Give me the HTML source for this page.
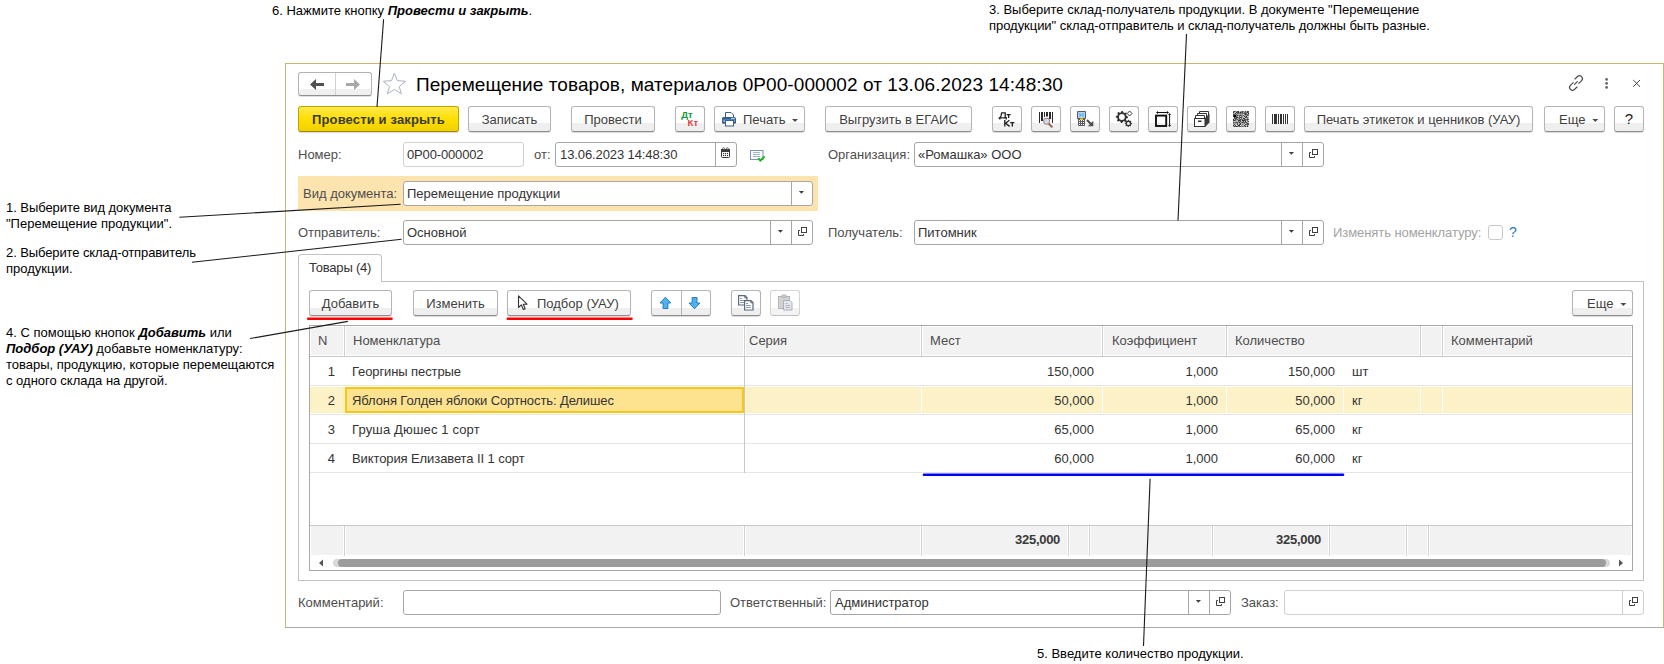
<!DOCTYPE html>
<html><head><meta charset="utf-8"><style>
html,body{margin:0;padding:0;background:#fff;width:1664px;height:664px;overflow:hidden;position:relative}
body>div,body>svg{position:absolute}
.t{white-space:nowrap;font-family:'Liberation Sans', sans-serif}
</style></head><body>
<div style="left:285px;top:63px;width:1379px;height:565px;box-sizing:border-box;border:1px solid #c8b672;border-bottom-color:#a9a9a9;background:#fff"></div>
<div style="left:298px;top:72px;width:74px;height:24px;box-sizing:border-box;border:1px solid #b3b3b3;border-bottom-color:#8f8f8f;border-radius:3px;background:linear-gradient(#fff 0,#fff 16px,#f0f0f0 16px);box-shadow:0 1px 0 rgba(0,0,0,.12)"></div>
<div style="left:335px;top:73px;width:1px;height:22px;background:#d2d2d2"></div>
<svg style="left:308px;top:77px" width="20" height="16" viewBox="0 0 20 16"><path d="M2 7.5 L8 2 L8 6 L16 6 L16 9 L8 9 L8 13 Z" fill="#505050"/></svg>
<svg style="left:344px;top:77px" width="20" height="16" viewBox="0 0 20 16"><path d="M16 7.5 L10 2 L10 6 L2 6 L2 9 L10 9 L10 13 Z" fill="#a8a8a8"/></svg>
<svg style="left:381px;top:71px" width="28" height="26" viewBox="0 0 28 26"><path d="M13.4 2.2 L16.3 9.6 L24.6 10.3 L18.2 15.6 L20.4 22.8 L13.4 18.5 L6.4 22.8 L8.6 15.6 L2.2 10.3 L10.5 9.6 Z" fill="none" stroke="#aab2c2" stroke-width="1"/></svg>
<div class="t" style="top:74px;font-size:19px;line-height:22px;color:#000;left:416px;letter-spacing:0.07px">Перемещение товаров, материалов 0Р00-000002 от 13.06.2023 14:48:30</div>
<svg style="left:1565px;top:72px" width="22" height="22" viewBox="0 0 22 22"><g fill="none" stroke="#4a4a4a" stroke-width="1.15" stroke-linecap="round"><path d="M9.6 12.4 L12.4 9.6"/><path d="M8.2 10.6 L5.4 13.4 a2.9 2.9 0 0 0 4.1 4.1 L12 15"/><path d="M13.8 11.4 L16.6 8.6 a2.9 2.9 0 0 0 -4.1 -4.1 L10 7"/></g></svg>
<svg style="left:1603px;top:77px" width="8" height="14" viewBox="0 0 8 14"><g fill="#666"><circle cx="3.6" cy="2.4" r="1.4"/><circle cx="3.6" cy="6.4" r="1.4"/><circle cx="3.6" cy="10.4" r="1.4"/></g></svg>
<svg style="left:1630px;top:78px" width="12" height="12" viewBox="0 0 12 12"><g stroke="#444" stroke-width="1"><path d="M3.2 2 L10 8.8 M10 2 L3.2 8.8"/></g></svg>
<div style="left:298px;top:106px;width:161px;height:26px;box-sizing:border-box;border:1px solid #c2a400;border-bottom-color:#a08800;border-radius:3px;background:linear-gradient(#ffe94d,#ffdf00 50%,#f2d000);box-shadow:0 1px 1px rgba(0,0,0,.15)"></div>
<div class="t" style="left:298px;width:161px;text-align:center;top:112px;font-size:13px;line-height:16px;color:#3a3a3a;font-weight:700;"><span style='letter-spacing:0.15px'>Провести и закрыть</span></div>
<div style="left:468px;top:106px;width:83px;height:26px;box-sizing:border-box;border:1px solid #b5b5b5;border-bottom-color:#8c8c8c;border-radius:3px;background:linear-gradient(#fff 0,#fff 16px,#efefef 16px);box-shadow:0 1px 1px rgba(0,0,0,.15)"></div>
<div class="t" style="left:468px;width:83px;text-align:center;top:112px;font-size:13px;line-height:16px;color:#404040;">Записать</div>
<div style="left:571px;top:106px;width:84px;height:26px;box-sizing:border-box;border:1px solid #b5b5b5;border-bottom-color:#8c8c8c;border-radius:3px;background:linear-gradient(#fff 0,#fff 16px,#efefef 16px);box-shadow:0 1px 1px rgba(0,0,0,.15)"></div>
<div class="t" style="left:571px;width:84px;text-align:center;top:112px;font-size:13px;line-height:16px;color:#404040;">Провести</div>
<div style="left:675px;top:106px;width:30px;height:26px;box-sizing:border-box;border:1px solid #b5b5b5;border-bottom-color:#8c8c8c;border-radius:3px;background:linear-gradient(#fff 0,#fff 16px,#efefef 16px);box-shadow:0 1px 1px rgba(0,0,0,.15)"></div>
<div style="left:714px;top:106px;width:91px;height:26px;box-sizing:border-box;border:1px solid #b5b5b5;border-bottom-color:#8c8c8c;border-radius:3px;background:linear-gradient(#fff 0,#fff 16px,#efefef 16px);box-shadow:0 1px 1px rgba(0,0,0,.15)"></div>
<svg style="left:720px;top:110px" width="18" height="18" viewBox="720 110 18 18"><path d="M725.5 112.5 H731 L733.5 115 V118.5 H725.5 Z" fill="#fff" stroke="#3b5f8c"/><rect x="722" y="117" width="14" height="6.8" rx="1.6" fill="#2f5f94"/><rect x="723.3" y="119.6" width="11.4" height="2.4" fill="#8fb0d8"/><rect x="731.3" y="117.8" width="1.3" height="1.2" fill="#fff"/><rect x="733.3" y="117.8" width="1.3" height="1.2" fill="#fff"/><rect x="725.5" y="120.5" width="8" height="5.5" fill="#fff" stroke="#3b5f8c"/></svg>
<div class="t" style="top:112px;font-size:13px;line-height:16px;color:#404040;left:743px;">Печать</div>
<svg style="left:792px;top:118px" width="8" height="6" viewBox="0 0 8 6"><path d="M0 1 H6 L3 4 Z" fill="#4d4d4d"/></svg>
<div style="left:825px;top:106px;width:147px;height:26px;box-sizing:border-box;border:1px solid #b5b5b5;border-bottom-color:#8c8c8c;border-radius:3px;background:linear-gradient(#fff 0,#fff 16px,#efefef 16px);box-shadow:0 1px 1px rgba(0,0,0,.15)"></div>
<div class="t" style="left:825px;width:147px;text-align:center;top:112px;font-size:13px;line-height:16px;color:#404040;">Выгрузить в ЕГАИС</div>
<div style="left:992px;top:106px;width:30px;height:26px;box-sizing:border-box;border:1px solid #b5b5b5;border-bottom-color:#8c8c8c;border-radius:3px;background:linear-gradient(#fff 0,#fff 16px,#efefef 16px);box-shadow:0 1px 1px rgba(0,0,0,.15)"></div>
<div style="left:1031px;top:106px;width:30px;height:26px;box-sizing:border-box;border:1px solid #b5b5b5;border-bottom-color:#8c8c8c;border-radius:3px;background:linear-gradient(#fff 0,#fff 16px,#efefef 16px);box-shadow:0 1px 1px rgba(0,0,0,.15)"></div>
<div style="left:1070px;top:106px;width:30px;height:26px;box-sizing:border-box;border:1px solid #b5b5b5;border-bottom-color:#8c8c8c;border-radius:3px;background:linear-gradient(#fff 0,#fff 16px,#efefef 16px);box-shadow:0 1px 1px rgba(0,0,0,.15)"></div>
<div style="left:1109px;top:106px;width:30px;height:26px;box-sizing:border-box;border:1px solid #b5b5b5;border-bottom-color:#8c8c8c;border-radius:3px;background:linear-gradient(#fff 0,#fff 16px,#efefef 16px);box-shadow:0 1px 1px rgba(0,0,0,.15)"></div>
<div style="left:1148px;top:106px;width:30px;height:26px;box-sizing:border-box;border:1px solid #b5b5b5;border-bottom-color:#8c8c8c;border-radius:3px;background:linear-gradient(#fff 0,#fff 16px,#efefef 16px);box-shadow:0 1px 1px rgba(0,0,0,.15)"></div>
<div style="left:1187px;top:106px;width:30px;height:26px;box-sizing:border-box;border:1px solid #b5b5b5;border-bottom-color:#8c8c8c;border-radius:3px;background:linear-gradient(#fff 0,#fff 16px,#efefef 16px);box-shadow:0 1px 1px rgba(0,0,0,.15)"></div>
<div style="left:1226px;top:106px;width:30px;height:26px;box-sizing:border-box;border:1px solid #b5b5b5;border-bottom-color:#8c8c8c;border-radius:3px;background:linear-gradient(#fff 0,#fff 16px,#efefef 16px);box-shadow:0 1px 1px rgba(0,0,0,.15)"></div>
<div style="left:1265px;top:106px;width:30px;height:26px;box-sizing:border-box;border:1px solid #b5b5b5;border-bottom-color:#8c8c8c;border-radius:3px;background:linear-gradient(#fff 0,#fff 16px,#efefef 16px);box-shadow:0 1px 1px rgba(0,0,0,.15)"></div>
<svg style="left:0;top:0" width="1664" height="140" viewBox="0 0 1664 140">
<g font-family="Liberation Sans" font-size="9.5" font-weight="700">
<text x="681.3" y="118" fill="#149a3c">Дт</text><text x="687.6" y="126" fill="#e23c3c">Кт</text>
</g>
<g stroke="#222" stroke-width="1.35" fill="none" stroke-linecap="butt">
<path d="M1001.2 112.8 H1005.2 V117.8 M1001.6 112.8 Q1001.6 116.5 999.8 117.8 H1006.6 M999.8 117 V119.6 M1006.2 117 V119.6"/>
<path d="M1006.6 114.6 H1010.6 M1008.6 114.6 V118"/>
<path d="M1004.8 120 V126.4 M1009.4 120.2 L1005.6 123.2 L1009.6 126.4"/>
<path d="M1010.2 122.6 H1014.4 M1012.3 122.6 V126.4"/>
</g>
<g fill="#2a2a2a">
<rect x="1039" y="112" width="1" height="11"/><rect x="1041" y="112" width="2" height="9"/><rect x="1044" y="112" width="1" height="5"/><rect x="1046" y="112" width="2" height="4.5"/><rect x="1049" y="112" width="2" height="7"/><rect x="1052" y="112" width="1" height="11"/>
</g>
<path d="M1049 124 L1051.8 126.8" stroke="#9a6a50" stroke-width="2" stroke-linecap="round"/>
<circle cx="1046.6" cy="121.2" r="3.1" fill="#c6def5" stroke="#b87060" stroke-width="1"/>
<path d="M1078 111 H1085 Q1086 111 1086 112 V118.5 L1085 119.5 V125 Q1085 126 1084 126 H1079 Q1078 126 1078 125 V119.5 L1077 118.5 V112 Q1077 111 1078 111 Z" fill="#5a5a5a"/>
<rect x="1078" y="112" width="7" height="6" fill="#a9d4f5"/>
<path d="M1079 113.5 L1081.5 115 L1079 116.5 M1082 114 H1084 M1082 116 H1084" stroke="#4aa0e0" stroke-width="0.9" fill="none"/>
<rect x="1080" y="118.4" width="3" height="1.6" fill="#f5d200"/>
<g fill="#fff"><rect x="1079" y="120" width="1" height="1"/><rect x="1081" y="120" width="1" height="1"/><rect x="1083" y="120" width="1" height="1"/><rect x="1079" y="122" width="1" height="1"/><rect x="1081" y="122" width="1" height="1"/><rect x="1083" y="122" width="1" height="1"/><rect x="1079" y="124" width="1" height="1"/><rect x="1081" y="124" width="1" height="1"/><rect x="1083" y="124" width="1" height="1"/></g>
<path d="M1087 120 L1091.5 124.5" stroke="#505050" stroke-width="2.2"/><path d="M1093.3 120.8 V126.3 H1087.8 Z" fill="#505050"/>
<path d="M1121.60 110.91 L1122.80 110.97 L1123.48 112.57 L1124.32 112.97 L1126.00 112.48 L1126.80 113.37 L1126.15 114.99 L1126.46 115.86 L1127.99 116.70 L1127.93 117.90 L1126.33 118.58 L1125.93 119.42 L1126.42 121.10 L1125.53 121.90 L1123.91 121.25 L1123.04 121.56 L1122.20 123.09 L1121.00 123.03 L1120.32 121.43 L1119.48 121.03 L1117.80 121.52 L1117.00 120.63 L1117.65 119.01 L1117.34 118.14 L1115.81 117.30 L1115.87 116.10 L1117.47 115.42 L1117.87 114.58 L1117.38 112.90 L1118.27 112.10 L1119.89 112.75 L1120.76 112.44 Z M1124.80 117.00 A2.9 2.9 0 1 0 1119.00 117.00 A2.9 2.9 0 1 0 1124.80 117.00 Z" fill="#333" fill-rule="evenodd"/>
<path d="M1128.22 119.70 L1128.94 119.74 L1129.34 120.76 L1129.84 121.00 L1130.88 120.66 L1131.37 121.20 L1130.93 122.20 L1131.12 122.72 L1132.10 123.22 L1132.06 123.94 L1131.04 124.34 L1130.80 124.84 L1131.14 125.88 L1130.60 126.37 L1129.60 125.93 L1129.08 126.12 L1128.58 127.10 L1127.86 127.06 L1127.46 126.04 L1126.96 125.80 L1125.92 126.14 L1125.43 125.60 L1125.87 124.60 L1125.68 124.08 L1124.70 123.58 L1124.74 122.86 L1125.76 122.46 L1126.00 121.96 L1125.66 120.92 L1126.20 120.43 L1127.20 120.87 L1127.72 120.68 Z M1129.90 123.40 A1.5 1.5 0 1 0 1126.90 123.40 A1.5 1.5 0 1 0 1129.90 123.40 Z" fill="#333" fill-rule="evenodd"/>
<path d="M1129.6 111 L1132 113.5 L1129.6 116 L1127.2 113.5 Z" fill="none" stroke="#333" stroke-width="1"/>
<rect x="1156" y="115.6" width="10.2" height="10.4" fill="none" stroke="#111" stroke-width="1.9"/>
<path d="M1157 112.5 H1168 M1169.6 114 V126" stroke="#111" stroke-width="1"/>
<path d="M1156 112.5 L1158 111 V114 Z M1169 112.5 L1167 111 V114 Z M1169.6 113 L1168.2 115 H1171 Z M1169.6 127 L1168.2 125 H1171 Z" fill="#111"/>
<path d="M1199.5 111.5 H1208.5 V118 H1199.5 Z" fill="#fff" stroke="#333"/>
<path d="M1197.5 113.5 H1206.5 V120 H1197.5 Z" fill="#fff" stroke="#333"/>
<path d="M1195.5 115.5 H1204.5 V120 H1195.5 Z" fill="#fff" stroke="#333"/>
<path d="M1205 118 L1209.5 113.5 V122.5 L1205 127 Z" fill="#3a3a3a"/>
<rect x="1194.5" y="118.5" width="10.5" height="8" fill="#fff" stroke="#333"/>
<rect x="1198" y="120.5" width="3.5" height="1.5" fill="#333"/>
<g fill="#3a3a3a"><rect x="1233" y="111" width="1" height="1" fill="#6a6a6a"/><rect x="1234" y="111" width="1" height="1" fill="#4a4a4a"/><rect x="1235" y="111" width="1" height="1" fill="#6a6a6a"/><rect x="1236" y="111" width="1" height="1" fill="#a0a0a0"/><rect x="1237" y="111" width="1" height="1" fill="#5a5a5a"/><rect x="1238" y="111" width="1" height="1" fill="#333"/><rect x="1239" y="111" width="1" height="1" fill="#d8d8d8"/><rect x="1240" y="111" width="1" height="1" fill="#a0a0a0"/><rect x="1241" y="111" width="1" height="1" fill="#8a8a8a"/><rect x="1242" y="111" width="1" height="1" fill="#4a4a4a"/><rect x="1243" y="111" width="1" height="1" fill="#8a8a8a"/><rect x="1244" y="111" width="1" height="1" fill="#b8b8b8"/><rect x="1245" y="111" width="1" height="1" fill="#4a4a4a"/><rect x="1246" y="111" width="1" height="1" fill="#b8b8b8"/><rect x="1247" y="111" width="1" height="1" fill="#333"/><rect x="1248" y="111" width="1" height="1" fill="#5a5a5a"/><rect x="1233" y="112" width="1" height="1" fill="#333"/><rect x="1234" y="112" width="1" height="1" fill="#b8b8b8"/><rect x="1235" y="112" width="1" height="1" fill="#b8b8b8"/><rect x="1236" y="112" width="1" height="1" fill="#333"/><rect x="1237" y="112" width="1" height="1" fill="#5a5a5a"/><rect x="1238" y="112" width="1" height="1" fill="#333"/><rect x="1239" y="112" width="1" height="1" fill="#8a8a8a"/><rect x="1240" y="112" width="1" height="1" fill="#333"/><rect x="1241" y="112" width="1" height="1" fill="#6a6a6a"/><rect x="1242" y="112" width="1" height="1" fill="#4a4a4a"/><rect x="1243" y="112" width="1" height="1" fill="#b8b8b8"/><rect x="1244" y="112" width="1" height="1" fill="#5a5a5a"/><rect x="1245" y="112" width="1" height="1" fill="#6a6a6a"/><rect x="1246" y="112" width="1" height="1" fill="#8a8a8a"/><rect x="1247" y="112" width="1" height="1" fill="#333"/><rect x="1248" y="112" width="1" height="1" fill="#6a6a6a"/><rect x="1233" y="113" width="1" height="1" fill="#a0a0a0"/><rect x="1234" y="113" width="1" height="1" fill="#a0a0a0"/><rect x="1235" y="113" width="1" height="1" fill="#4a4a4a"/><rect x="1236" y="113" width="1" height="1" fill="#a0a0a0"/><rect x="1237" y="113" width="1" height="1" fill="#6a6a6a"/><rect x="1238" y="113" width="1" height="1" fill="#6a6a6a"/><rect x="1239" y="113" width="1" height="1" fill="#8a8a8a"/><rect x="1240" y="113" width="1" height="1" fill="#5a5a5a"/><rect x="1241" y="113" width="1" height="1" fill="#8a8a8a"/><rect x="1242" y="113" width="1" height="1" fill="#6a6a6a"/><rect x="1243" y="113" width="1" height="1" fill="#8a8a8a"/><rect x="1244" y="113" width="1" height="1" fill="#4a4a4a"/><rect x="1245" y="113" width="1" height="1" fill="#5a5a5a"/><rect x="1246" y="113" width="1" height="1" fill="#5a5a5a"/><rect x="1247" y="113" width="1" height="1" fill="#d8d8d8"/><rect x="1248" y="113" width="1" height="1" fill="#333"/><rect x="1233" y="114" width="1" height="1" fill="#4a4a4a"/><rect x="1234" y="114" width="1" height="1" fill="#5a5a5a"/><rect x="1235" y="114" width="1" height="1" fill="#6a6a6a"/><rect x="1236" y="114" width="1" height="1" fill="#6a6a6a"/><rect x="1237" y="114" width="1" height="1" fill="#a0a0a0"/><rect x="1238" y="114" width="1" height="1" fill="#a0a0a0"/><rect x="1239" y="114" width="1" height="1" fill="#b8b8b8"/><rect x="1240" y="114" width="1" height="1" fill="#a0a0a0"/><rect x="1241" y="114" width="1" height="1" fill="#a0a0a0"/><rect x="1242" y="114" width="1" height="1" fill="#a0a0a0"/><rect x="1243" y="114" width="1" height="1" fill="#d8d8d8"/><rect x="1244" y="114" width="1" height="1" fill="#8a8a8a"/><rect x="1245" y="114" width="1" height="1" fill="#333"/><rect x="1246" y="114" width="1" height="1" fill="#5a5a5a"/><rect x="1247" y="114" width="1" height="1" fill="#6a6a6a"/><rect x="1248" y="114" width="1" height="1" fill="#6a6a6a"/><rect x="1233" y="115" width="1" height="1" fill="#4a4a4a"/><rect x="1234" y="115" width="1" height="1" fill="#8a8a8a"/><rect x="1235" y="115" width="1" height="1" fill="#6a6a6a"/><rect x="1236" y="115" width="1" height="1" fill="#8a8a8a"/><rect x="1237" y="115" width="1" height="1" fill="#4a4a4a"/><rect x="1238" y="115" width="1" height="1" fill="#8a8a8a"/><rect x="1239" y="115" width="1" height="1" fill="#6a6a6a"/><rect x="1240" y="115" width="1" height="1" fill="#333"/><rect x="1241" y="115" width="1" height="1" fill="#5a5a5a"/><rect x="1242" y="115" width="1" height="1" fill="#a0a0a0"/><rect x="1243" y="115" width="1" height="1" fill="#4a4a4a"/><rect x="1244" y="115" width="1" height="1" fill="#b8b8b8"/><rect x="1245" y="115" width="1" height="1" fill="#a0a0a0"/><rect x="1246" y="115" width="1" height="1" fill="#8a8a8a"/><rect x="1247" y="115" width="1" height="1" fill="#5a5a5a"/><rect x="1248" y="115" width="1" height="1" fill="#8a8a8a"/><rect x="1233" y="116" width="1" height="1" fill="#333"/><rect x="1234" y="116" width="1" height="1" fill="#5a5a5a"/><rect x="1235" y="116" width="1" height="1" fill="#333"/><rect x="1236" y="116" width="1" height="1" fill="#5a5a5a"/><rect x="1237" y="116" width="1" height="1" fill="#a0a0a0"/><rect x="1238" y="116" width="1" height="1" fill="#b8b8b8"/><rect x="1239" y="116" width="1" height="1" fill="#6a6a6a"/><rect x="1240" y="116" width="1" height="1" fill="#d8d8d8"/><rect x="1241" y="116" width="1" height="1" fill="#8a8a8a"/><rect x="1242" y="116" width="1" height="1" fill="#8a8a8a"/><rect x="1243" y="116" width="1" height="1" fill="#d8d8d8"/><rect x="1244" y="116" width="1" height="1" fill="#333"/><rect x="1245" y="116" width="1" height="1" fill="#8a8a8a"/><rect x="1246" y="116" width="1" height="1" fill="#333"/><rect x="1247" y="116" width="1" height="1" fill="#d8d8d8"/><rect x="1248" y="116" width="1" height="1" fill="#d8d8d8"/><rect x="1233" y="117" width="1" height="1" fill="#d8d8d8"/><rect x="1234" y="117" width="1" height="1" fill="#333"/><rect x="1235" y="117" width="1" height="1" fill="#8a8a8a"/><rect x="1236" y="117" width="1" height="1" fill="#333"/><rect x="1237" y="117" width="1" height="1" fill="#4a4a4a"/><rect x="1238" y="117" width="1" height="1" fill="#8a8a8a"/><rect x="1239" y="117" width="1" height="1" fill="#6a6a6a"/><rect x="1240" y="117" width="1" height="1" fill="#333"/><rect x="1241" y="117" width="1" height="1" fill="#4a4a4a"/><rect x="1242" y="117" width="1" height="1" fill="#a0a0a0"/><rect x="1243" y="117" width="1" height="1" fill="#b8b8b8"/><rect x="1244" y="117" width="1" height="1" fill="#d8d8d8"/><rect x="1245" y="117" width="1" height="1" fill="#4a4a4a"/><rect x="1246" y="117" width="1" height="1" fill="#5a5a5a"/><rect x="1247" y="117" width="1" height="1" fill="#6a6a6a"/><rect x="1248" y="117" width="1" height="1" fill="#a0a0a0"/><rect x="1233" y="118" width="1" height="1" fill="#d8d8d8"/><rect x="1234" y="118" width="1" height="1" fill="#5a5a5a"/><rect x="1235" y="118" width="1" height="1" fill="#4a4a4a"/><rect x="1236" y="118" width="1" height="1" fill="#333"/><rect x="1237" y="118" width="1" height="1" fill="#b8b8b8"/><rect x="1238" y="118" width="1" height="1" fill="#8a8a8a"/><rect x="1239" y="118" width="1" height="1" fill="#5a5a5a"/><rect x="1240" y="118" width="1" height="1" fill="#d8d8d8"/><rect x="1241" y="118" width="1" height="1" fill="#6a6a6a"/><rect x="1242" y="118" width="1" height="1" fill="#d8d8d8"/><rect x="1243" y="118" width="1" height="1" fill="#333"/><rect x="1244" y="118" width="1" height="1" fill="#333"/><rect x="1245" y="118" width="1" height="1" fill="#b8b8b8"/><rect x="1246" y="118" width="1" height="1" fill="#b8b8b8"/><rect x="1247" y="118" width="1" height="1" fill="#8a8a8a"/><rect x="1248" y="118" width="1" height="1" fill="#d8d8d8"/><rect x="1233" y="119" width="1" height="1" fill="#333"/><rect x="1234" y="119" width="1" height="1" fill="#b8b8b8"/><rect x="1235" y="119" width="1" height="1" fill="#4a4a4a"/><rect x="1236" y="119" width="1" height="1" fill="#8a8a8a"/><rect x="1237" y="119" width="1" height="1" fill="#5a5a5a"/><rect x="1238" y="119" width="1" height="1" fill="#a0a0a0"/><rect x="1239" y="119" width="1" height="1" fill="#6a6a6a"/><rect x="1240" y="119" width="1" height="1" fill="#333"/><rect x="1241" y="119" width="1" height="1" fill="#8a8a8a"/><rect x="1242" y="119" width="1" height="1" fill="#5a5a5a"/><rect x="1243" y="119" width="1" height="1" fill="#a0a0a0"/><rect x="1244" y="119" width="1" height="1" fill="#4a4a4a"/><rect x="1245" y="119" width="1" height="1" fill="#6a6a6a"/><rect x="1246" y="119" width="1" height="1" fill="#6a6a6a"/><rect x="1247" y="119" width="1" height="1" fill="#333"/><rect x="1248" y="119" width="1" height="1" fill="#5a5a5a"/><rect x="1233" y="120" width="1" height="1" fill="#4a4a4a"/><rect x="1234" y="120" width="1" height="1" fill="#333"/><rect x="1235" y="120" width="1" height="1" fill="#6a6a6a"/><rect x="1236" y="120" width="1" height="1" fill="#b8b8b8"/><rect x="1237" y="120" width="1" height="1" fill="#b8b8b8"/><rect x="1238" y="120" width="1" height="1" fill="#333"/><rect x="1239" y="120" width="1" height="1" fill="#333"/><rect x="1240" y="120" width="1" height="1" fill="#5a5a5a"/><rect x="1241" y="120" width="1" height="1" fill="#b8b8b8"/><rect x="1242" y="120" width="1" height="1" fill="#333"/><rect x="1243" y="120" width="1" height="1" fill="#333"/><rect x="1244" y="120" width="1" height="1" fill="#333"/><rect x="1245" y="120" width="1" height="1" fill="#5a5a5a"/><rect x="1246" y="120" width="1" height="1" fill="#a0a0a0"/><rect x="1247" y="120" width="1" height="1" fill="#6a6a6a"/><rect x="1248" y="120" width="1" height="1" fill="#d8d8d8"/><rect x="1233" y="121" width="1" height="1" fill="#8a8a8a"/><rect x="1234" y="121" width="1" height="1" fill="#d8d8d8"/><rect x="1235" y="121" width="1" height="1" fill="#b8b8b8"/><rect x="1236" y="121" width="1" height="1" fill="#a0a0a0"/><rect x="1237" y="121" width="1" height="1" fill="#b8b8b8"/><rect x="1238" y="121" width="1" height="1" fill="#6a6a6a"/><rect x="1239" y="121" width="1" height="1" fill="#a0a0a0"/><rect x="1240" y="121" width="1" height="1" fill="#4a4a4a"/><rect x="1241" y="121" width="1" height="1" fill="#b8b8b8"/><rect x="1242" y="121" width="1" height="1" fill="#a0a0a0"/><rect x="1243" y="121" width="1" height="1" fill="#333"/><rect x="1244" y="121" width="1" height="1" fill="#d8d8d8"/><rect x="1245" y="121" width="1" height="1" fill="#333"/><rect x="1246" y="121" width="1" height="1" fill="#d8d8d8"/><rect x="1247" y="121" width="1" height="1" fill="#8a8a8a"/><rect x="1248" y="121" width="1" height="1" fill="#4a4a4a"/><rect x="1233" y="122" width="1" height="1" fill="#6a6a6a"/><rect x="1234" y="122" width="1" height="1" fill="#6a6a6a"/><rect x="1235" y="122" width="1" height="1" fill="#6a6a6a"/><rect x="1236" y="122" width="1" height="1" fill="#5a5a5a"/><rect x="1237" y="122" width="1" height="1" fill="#6a6a6a"/><rect x="1238" y="122" width="1" height="1" fill="#8a8a8a"/><rect x="1239" y="122" width="1" height="1" fill="#333"/><rect x="1240" y="122" width="1" height="1" fill="#a0a0a0"/><rect x="1241" y="122" width="1" height="1" fill="#8a8a8a"/><rect x="1242" y="122" width="1" height="1" fill="#4a4a4a"/><rect x="1243" y="122" width="1" height="1" fill="#5a5a5a"/><rect x="1244" y="122" width="1" height="1" fill="#5a5a5a"/><rect x="1245" y="122" width="1" height="1" fill="#6a6a6a"/><rect x="1246" y="122" width="1" height="1" fill="#333"/><rect x="1247" y="122" width="1" height="1" fill="#b8b8b8"/><rect x="1248" y="122" width="1" height="1" fill="#d8d8d8"/><rect x="1233" y="123" width="1" height="1" fill="#6a6a6a"/><rect x="1234" y="123" width="1" height="1" fill="#a0a0a0"/><rect x="1235" y="123" width="1" height="1" fill="#a0a0a0"/><rect x="1236" y="123" width="1" height="1" fill="#a0a0a0"/><rect x="1237" y="123" width="1" height="1" fill="#5a5a5a"/><rect x="1238" y="123" width="1" height="1" fill="#b8b8b8"/><rect x="1239" y="123" width="1" height="1" fill="#a0a0a0"/><rect x="1240" y="123" width="1" height="1" fill="#4a4a4a"/><rect x="1241" y="123" width="1" height="1" fill="#a0a0a0"/><rect x="1242" y="123" width="1" height="1" fill="#a0a0a0"/><rect x="1243" y="123" width="1" height="1" fill="#b8b8b8"/><rect x="1244" y="123" width="1" height="1" fill="#6a6a6a"/><rect x="1245" y="123" width="1" height="1" fill="#d8d8d8"/><rect x="1246" y="123" width="1" height="1" fill="#a0a0a0"/><rect x="1247" y="123" width="1" height="1" fill="#333"/><rect x="1248" y="123" width="1" height="1" fill="#5a5a5a"/><rect x="1233" y="124" width="1" height="1" fill="#b8b8b8"/><rect x="1234" y="124" width="1" height="1" fill="#5a5a5a"/><rect x="1235" y="124" width="1" height="1" fill="#a0a0a0"/><rect x="1236" y="124" width="1" height="1" fill="#d8d8d8"/><rect x="1237" y="124" width="1" height="1" fill="#333"/><rect x="1238" y="124" width="1" height="1" fill="#d8d8d8"/><rect x="1239" y="124" width="1" height="1" fill="#4a4a4a"/><rect x="1240" y="124" width="1" height="1" fill="#4a4a4a"/><rect x="1241" y="124" width="1" height="1" fill="#b8b8b8"/><rect x="1242" y="124" width="1" height="1" fill="#8a8a8a"/><rect x="1243" y="124" width="1" height="1" fill="#a0a0a0"/><rect x="1244" y="124" width="1" height="1" fill="#d8d8d8"/><rect x="1245" y="124" width="1" height="1" fill="#333"/><rect x="1246" y="124" width="1" height="1" fill="#6a6a6a"/><rect x="1247" y="124" width="1" height="1" fill="#5a5a5a"/><rect x="1248" y="124" width="1" height="1" fill="#5a5a5a"/><rect x="1233" y="125" width="1" height="1" fill="#333"/><rect x="1234" y="125" width="1" height="1" fill="#a0a0a0"/><rect x="1235" y="125" width="1" height="1" fill="#5a5a5a"/><rect x="1236" y="125" width="1" height="1" fill="#d8d8d8"/><rect x="1237" y="125" width="1" height="1" fill="#a0a0a0"/><rect x="1238" y="125" width="1" height="1" fill="#333"/><rect x="1239" y="125" width="1" height="1" fill="#333"/><rect x="1240" y="125" width="1" height="1" fill="#d8d8d8"/><rect x="1241" y="125" width="1" height="1" fill="#a0a0a0"/><rect x="1242" y="125" width="1" height="1" fill="#b8b8b8"/><rect x="1243" y="125" width="1" height="1" fill="#b8b8b8"/><rect x="1244" y="125" width="1" height="1" fill="#333"/><rect x="1245" y="125" width="1" height="1" fill="#a0a0a0"/><rect x="1246" y="125" width="1" height="1" fill="#d8d8d8"/><rect x="1247" y="125" width="1" height="1" fill="#5a5a5a"/><rect x="1248" y="125" width="1" height="1" fill="#b8b8b8"/><rect x="1233" y="126" width="1" height="1" fill="#a0a0a0"/><rect x="1234" y="126" width="1" height="1" fill="#4a4a4a"/><rect x="1235" y="126" width="1" height="1" fill="#5a5a5a"/><rect x="1236" y="126" width="1" height="1" fill="#333"/><rect x="1237" y="126" width="1" height="1" fill="#5a5a5a"/><rect x="1238" y="126" width="1" height="1" fill="#8a8a8a"/><rect x="1239" y="126" width="1" height="1" fill="#5a5a5a"/><rect x="1240" y="126" width="1" height="1" fill="#6a6a6a"/><rect x="1241" y="126" width="1" height="1" fill="#8a8a8a"/><rect x="1242" y="126" width="1" height="1" fill="#6a6a6a"/><rect x="1243" y="126" width="1" height="1" fill="#8a8a8a"/><rect x="1244" y="126" width="1" height="1" fill="#8a8a8a"/><rect x="1245" y="126" width="1" height="1" fill="#333"/><rect x="1246" y="126" width="1" height="1" fill="#b8b8b8"/><rect x="1247" y="126" width="1" height="1" fill="#333"/><rect x="1248" y="126" width="1" height="1" fill="#d8d8d8"/><rect x="1234" y="115" width="2" height="2" fill="#000"/></g>
<g fill="#333"><rect x="1272" y="114" width="1" height="10"/><rect x="1274" y="114" width="3" height="10"/><rect x="1278" y="114" width="1" height="10"/><rect x="1280" y="114" width="2" height="10"/><rect x="1283" y="114" width="1" height="10"/><rect x="1285" y="114" width="1" height="10"/><rect x="1287" y="114" width="1" height="10"/></g>
</svg>
<div style="left:1304px;top:106px;width:229px;height:26px;box-sizing:border-box;border:1px solid #b5b5b5;border-bottom-color:#8c8c8c;border-radius:3px;background:linear-gradient(#fff 0,#fff 16px,#efefef 16px);box-shadow:0 1px 1px rgba(0,0,0,.15)"></div>
<div class="t" style="left:1304px;width:229px;text-align:center;top:112px;font-size:13px;line-height:16px;color:#404040;">Печать этикеток и ценников (УАУ)</div>
<div style="left:1544px;top:106px;width:61px;height:26px;box-sizing:border-box;border:1px solid #b5b5b5;border-bottom-color:#8c8c8c;border-radius:3px;background:linear-gradient(#fff 0,#fff 16px,#efefef 16px);box-shadow:0 1px 1px rgba(0,0,0,.15)"></div>
<div class="t" style="top:112px;font-size:13px;line-height:16px;color:#404040;left:1559px;">Еще</div>
<svg style="left:1592px;top:118px" width="8" height="6" viewBox="0 0 8 6"><path d="M0.3 1 H6.3 L3.3 4 Z" fill="#4d4d4d"/></svg>
<div style="left:1614px;top:106px;width:30px;height:26px;box-sizing:border-box;border:1px solid #b5b5b5;border-bottom-color:#8c8c8c;border-radius:3px;background:linear-gradient(#fff 0,#fff 16px,#efefef 16px);box-shadow:0 1px 1px rgba(0,0,0,.15)"></div>
<div class="t" style="left:1614px;width:30px;text-align:center;top:110px;font-size:15px;line-height:18px;color:#222">?</div>
<div class="t" style="top:147px;font-size:13px;line-height:16px;color:#4d4d4d;left:298px;">Номер:</div>
<div style="left:403px;top:142px;width:121px;height:25px;box-sizing:border-box;border:1px solid #d0d0d0;border-radius:3px;background:#fff"></div>
<div class="t" style="top:147px;font-size:13px;line-height:16px;color:#333;left:407px;letter-spacing:-0.15px">0P00-000002</div>
<div class="t" style="top:147px;font-size:13px;line-height:16px;color:#4d4d4d;left:534px;">от:</div>
<div style="left:555px;top:142px;width:182px;height:25px;box-sizing:border-box;border:1px solid #a6a6a6;border-radius:3px;background:#fff"></div>
<div style="left:715px;top:143px;width:1px;height:23px;background:#a6a6a6"></div>
<div class="t" style="top:147px;font-size:13px;line-height:16px;color:#333;left:560px;letter-spacing:-0.1px">13.06.2023 14:48:30</div>
<svg style="left:716px;top:143px" width="52" height="22" viewBox="716 143 52 22"><rect x="721.5" y="149.5" width="8" height="8" rx="1" fill="#fff" stroke="#3a3a3a"/><rect x="721" y="149" width="9" height="3" fill="#3a3a3a"/><circle cx="723.6" cy="148.6" r="0.9" fill="#fff" stroke="#3a3a3a" stroke-width="0.7"/><circle cx="727.4" cy="148.6" r="0.9" fill="#fff" stroke="#3a3a3a" stroke-width="0.7"/><g fill="#3a3a3a"><circle cx="723.5" cy="153.5" r="0.65"/><circle cx="725.5" cy="153.5" r="0.65"/><circle cx="727.5" cy="153.5" r="0.65"/><circle cx="723.5" cy="155.5" r="0.65"/><circle cx="725.5" cy="155.5" r="0.65"/><circle cx="727.5" cy="155.5" r="0.65"/></g>
<rect x="750.5" y="150.5" width="12.5" height="9" fill="#fafbfd" stroke="#7a94b8"/><path d="M753 152.5 H760 M753 154.5 H760 M753 156.5 H760" stroke="#8da0b8" stroke-width="0.8"/><path d="M758.2 158.3 L760.4 160.6 L764.6 156.4" fill="none" stroke="#1fb21f" stroke-width="2"/></svg>
<div class="t" style="top:147px;font-size:13px;line-height:16px;color:#4d4d4d;left:828px;">Организация:</div>
<div style="left:914px;top:142px;width:410px;height:25px;box-sizing:border-box;border:1px solid #a6a6a6;border-radius:3px;background:#fff"></div>
<div style="left:1281px;top:143px;width:1px;height:23px;background:#a6a6a6"></div>
<div style="left:1302px;top:143px;width:1px;height:23px;background:#a6a6a6"></div>
<div class="t" style="top:147px;font-size:13px;line-height:16px;color:#333;left:918px;">«Ромашка» ООО</div>
<svg style="left:1287px;top:151px" width="8" height="6" viewBox="0 0 8 6"><path d="M1.8 1 H7 L4.4 3.8 Z" fill="#404040"/></svg>
<svg style="left:1308px;top:149px" width="11" height="11" viewBox="0 0 11 11"><g fill="none" stroke="#404040" stroke-width="1"><rect x="4.5" y="0.5" width="5" height="5"/><path d="M3 3.5 H1.5 V8.5 H6.5 V7"/></g></svg>
<div style="left:298px;top:176px;width:520px;height:35px;background:#fde4ae"></div>
<div class="t" style="top:186px;font-size:13px;line-height:16px;color:#4d4d4d;left:303px;">Вид документа:</div>
<div style="left:403px;top:181px;width:410px;height:25px;box-sizing:border-box;border:1px solid #a6a6a6;border-radius:3px;background:#fff"></div>
<div style="left:791px;top:182px;width:1px;height:23px;background:#a6a6a6"></div>
<div class="t" style="top:186px;font-size:13px;line-height:16px;color:#333;left:407px;">Перемещение продукции</div>
<svg style="left:797px;top:190px" width="8" height="6" viewBox="0 0 8 6"><path d="M1.8 1 H7 L4.4 3.8 Z" fill="#404040"/></svg>
<div class="t" style="top:225px;font-size:13px;line-height:16px;color:#4d4d4d;left:298px;">Отправитель:</div>
<div style="left:403px;top:220px;width:410px;height:25px;box-sizing:border-box;border:1px solid #a6a6a6;border-radius:3px;background:#fff"></div>
<div style="left:770px;top:221px;width:1px;height:23px;background:#a6a6a6"></div>
<div style="left:791px;top:221px;width:1px;height:23px;background:#a6a6a6"></div>
<div class="t" style="top:225px;font-size:13px;line-height:16px;color:#333;left:407px;">Основной</div>
<svg style="left:776px;top:229px" width="8" height="6" viewBox="0 0 8 6"><path d="M1.8 1 H7 L4.4 3.8 Z" fill="#404040"/></svg>
<svg style="left:797px;top:227px" width="11" height="11" viewBox="0 0 11 11"><g fill="none" stroke="#404040" stroke-width="1"><rect x="4.5" y="0.5" width="5" height="5"/><path d="M3 3.5 H1.5 V8.5 H6.5 V7"/></g></svg>
<div class="t" style="top:225px;font-size:13px;line-height:16px;color:#4d4d4d;left:828px;">Получатель:</div>
<div style="left:914px;top:220px;width:410px;height:25px;box-sizing:border-box;border:1px solid #a6a6a6;border-radius:3px;background:#fff"></div>
<div style="left:1281px;top:221px;width:1px;height:23px;background:#a6a6a6"></div>
<div style="left:1302px;top:221px;width:1px;height:23px;background:#a6a6a6"></div>
<div class="t" style="top:225px;font-size:13px;line-height:16px;color:#333;left:918px;">Питомник</div>
<svg style="left:1287px;top:229px" width="8" height="6" viewBox="0 0 8 6"><path d="M1.8 1 H7 L4.4 3.8 Z" fill="#404040"/></svg>
<svg style="left:1308px;top:227px" width="11" height="11" viewBox="0 0 11 11"><g fill="none" stroke="#404040" stroke-width="1"><rect x="4.5" y="0.5" width="5" height="5"/><path d="M3 3.5 H1.5 V8.5 H6.5 V7"/></g></svg>
<div class="t" style="top:225px;font-size:13px;line-height:16px;color:#a3a3a3;left:1333px;letter-spacing:-0.07px">Изменять номенклатуру:</div>
<div style="left:1488px;top:225px;width:15px;height:15px;box-sizing:border-box;border:1px solid #c9c9c9;border-radius:3px;background:#fff"></div>
<div class="t" style="left:1509px;top:224px;font-size:14px;line-height:17px;color:#2f7bc0">?</div>
<div style="left:298px;top:281px;width:1346px;height:300px;box-sizing:border-box;border:1px solid #c2c2c2;background:#fff"></div>
<div style="left:298px;top:254px;width:84px;height:28px;box-sizing:border-box;border:1px solid #c2c2c2;border-bottom:none;border-radius:4px 4px 0 0;background:#fff"></div>
<div class="t" style="top:260px;font-size:13px;line-height:16px;color:#333;left:309px;letter-spacing:-0.2px">Товары (4)</div>
<div style="left:309px;top:290px;width:83px;height:26px;box-sizing:border-box;border:1px solid #b5b5b5;border-bottom-color:#8c8c8c;border-radius:3px;background:linear-gradient(#fff 0,#fff 17px,#efefef 17px);box-shadow:0 1px 1px rgba(0,0,0,.15)"></div>
<div class="t" style="left:309px;width:83px;text-align:center;top:296px;font-size:13px;line-height:16px;color:#404040;">Добавить</div>
<div style="left:413px;top:290px;width:85px;height:26px;box-sizing:border-box;border:1px solid #b5b5b5;border-bottom-color:#8c8c8c;border-radius:3px;background:linear-gradient(#fff 0,#fff 17px,#efefef 17px);box-shadow:0 1px 1px rgba(0,0,0,.15)"></div>
<div class="t" style="left:413px;width:85px;text-align:center;top:296px;font-size:13px;line-height:16px;color:#404040;">Изменить</div>
<div style="left:507px;top:290px;width:124px;height:26px;box-sizing:border-box;border:1px solid #b5b5b5;border-bottom-color:#8c8c8c;border-radius:3px;background:linear-gradient(#fff 0,#fff 17px,#efefef 17px);box-shadow:0 1px 1px rgba(0,0,0,.15)"></div>
<svg style="left:516px;top:294px" width="14" height="18" viewBox="0 0 14 18"><path d="M2.5 1.8 V13.5 L5.3 10.8 L7.3 15.5 L9.2 14.7 L7.3 10.2 L11 10.2 Z" fill="#fff" stroke="#333" stroke-width="1.1" stroke-linejoin="round"/></svg>
<div class="t" style="top:296px;font-size:13px;line-height:16px;color:#404040;left:537px;">Подбор (УАУ)</div>
<div style="left:651px;top:290px;width:60px;height:26px;box-sizing:border-box;border:1px solid #b5b5b5;border-bottom-color:#8c8c8c;border-radius:3px;background:linear-gradient(#fff 0,#fff 17px,#efefef 17px);box-shadow:0 1px 1px rgba(0,0,0,.15)"></div>
<div style="left:681px;top:291px;width:1px;height:24px;background:#b5b5b5"></div>
<svg style="left:655px;top:292px" width="50" height="22" viewBox="655 292 50 22"><path d="M665.4 297.2 L670.8 303 H667.9 V308.5 H663 V303 H660 Z" fill="#4cb3ef" stroke="#2272b8" stroke-width="0.9" stroke-linejoin="miter"/><path d="M694.5 308.8 L699.9 303 H697 V297.5 H692.1 V303 H689.1 Z" fill="#4cb3ef" stroke="#2272b8" stroke-width="0.9"/></svg>
<div style="left:731px;top:290px;width:30px;height:26px;box-sizing:border-box;border:1px solid #b5b5b5;border-bottom-color:#8c8c8c;border-radius:3px;background:linear-gradient(#fff 0,#fff 17px,#efefef 17px);box-shadow:0 1px 1px rgba(0,0,0,.15)"></div>
<svg style="left:734px;top:292px" width="24" height="22" viewBox="734 292 24 22"><path d="M738.6 295.6 H745 L747 297.6 V305 H738.6 Z" fill="#fff" stroke="#586a80" stroke-width="1.2"/><path d="M744.8 295.6 V297.8 H747" fill="none" stroke="#586a80" stroke-width="1"/><path d="M740 298.5 H742 M740 300.5 H744.5 M740 302.5 H744.5" stroke="#7d8ea3" stroke-width="0.9"/><path d="M744.6 300.6 H751 L753 302.6 V310 H744.6 Z" fill="#fff" stroke="#586a80" stroke-width="1.2"/><path d="M750.8 300.6 V302.8 H753" fill="none" stroke="#586a80" stroke-width="1"/><path d="M746 303.5 H748 M746 305.5 H750.8 M746 307.5 H750.8" stroke="#7d8ea3" stroke-width="0.9"/></svg>
<div style="left:770px;top:290px;width:30px;height:26px;box-sizing:border-box;border:1px solid #d4d4d4;border-bottom-color:#c0c0c0;border-radius:3px;background:linear-gradient(#fff 0,#fff 17px,#f3f3f3 17px)"></div>
<svg style="left:773px;top:292px" width="24" height="22" viewBox="773 292 24 22"><rect x="778.5" y="296.5" width="11" height="12" fill="#d2d2d2" stroke="#b4b4b4"/><rect x="782" y="295" width="4" height="2.5" fill="#c8c8c8" stroke="#b4b4b4" stroke-width="0.8"/><path d="M783.5 300.5 H790 L792 302.5 V310 H783.5 Z" fill="#e6e7ea" stroke="#a3afbf"/><path d="M785.5 303.5 H787.5 M785.5 305.5 H790 M785.5 307.5 H790" stroke="#a3afbf" stroke-width="0.9"/></svg>
<div style="left:1572px;top:290px;width:61px;height:26px;box-sizing:border-box;border:1px solid #b5b5b5;border-bottom-color:#8c8c8c;border-radius:3px;background:linear-gradient(#fff 0,#fff 17px,#efefef 17px);box-shadow:0 1px 1px rgba(0,0,0,.15)"></div>
<div class="t" style="top:296px;font-size:13px;line-height:16px;color:#404040;left:1587px;">Еще</div>
<svg style="left:1620px;top:302px" width="8" height="6" viewBox="0 0 8 6"><path d="M0.3 1 H6.3 L3.3 4 Z" fill="#4d4d4d"/></svg>
<div style="left:309px;top:325px;width:1324px;height:246px;box-sizing:border-box;border:1px solid #a8a8a8;background:#fff"></div>
<div style="left:310px;top:356px;width:1322px;height:1px;background:#c8c8c8"></div>
<div style="left:311px;top:327px;width:32px;height:28px;background:#f2f2f2"></div>
<div style="left:346px;top:327px;width:397px;height:28px;background:#f2f2f2"></div>
<div style="left:746px;top:327px;width:174px;height:28px;background:#f2f2f2"></div>
<div style="left:923px;top:327px;width:178px;height:28px;background:#f2f2f2"></div>
<div style="left:1104px;top:327px;width:121px;height:28px;background:#f2f2f2"></div>
<div style="left:1228px;top:327px;width:191px;height:28px;background:#f2f2f2"></div>
<div style="left:1422px;top:327px;width:19px;height:28px;background:#f2f2f2"></div>
<div style="left:1444px;top:327px;width:187px;height:28px;background:#f2f2f2"></div>
<div style="left:344px;top:326px;width:1px;height:30px;background:#d0d0d0"></div>
<div style="left:744px;top:326px;width:1px;height:30px;background:#d0d0d0"></div>
<div style="left:921px;top:326px;width:1px;height:30px;background:#d0d0d0"></div>
<div style="left:1102px;top:326px;width:1px;height:30px;background:#d0d0d0"></div>
<div style="left:1226px;top:326px;width:1px;height:30px;background:#d0d0d0"></div>
<div style="left:1420px;top:326px;width:1px;height:30px;background:#d0d0d0"></div>
<div style="left:1442px;top:326px;width:1px;height:30px;background:#d0d0d0"></div>
<div class="t" style="top:333px;font-size:13px;line-height:16px;color:#4d4d4d;left:318px;">N</div>
<div class="t" style="top:333px;font-size:13px;line-height:16px;color:#4d4d4d;left:353px;">Номенклатура</div>
<div class="t" style="top:333px;font-size:13px;line-height:16px;color:#4d4d4d;left:749px;">Серия</div>
<div class="t" style="top:333px;font-size:13px;line-height:16px;color:#4d4d4d;left:930px;">Мест</div>
<div class="t" style="top:333px;font-size:13px;line-height:16px;color:#4d4d4d;left:1112px;">Коэффициент</div>
<div class="t" style="top:333px;font-size:13px;line-height:16px;color:#4d4d4d;left:1235px;">Количество</div>
<div class="t" style="top:333px;font-size:13px;line-height:16px;color:#4d4d4d;left:1451px;">Комментарий</div>
<div style="left:310px;top:385px;width:1322px;height:1px;background:#e6e6e6"></div>
<div style="left:744px;top:357px;width:1px;height:29px;background:#c8c8c8"></div>
<div class="t" style="top:364px;font-size:13px;line-height:16px;color:#333;right:1329px;">1</div>
<div class="t" style="top:364px;font-size:13px;line-height:16px;color:#333;left:352px;letter-spacing:-0.1px">Георгины пестрые</div>
<div class="t" style="top:364px;font-size:13px;line-height:16px;color:#333;right:570px;">150,000</div>
<div class="t" style="top:364px;font-size:13px;line-height:16px;color:#333;right:446px;">1,000</div>
<div class="t" style="top:364px;font-size:13px;line-height:16px;color:#333;right:329px;">150,000</div>
<div class="t" style="top:364px;font-size:13px;line-height:16px;color:#333;left:1352px;">шт</div>
<div style="left:310px;top:387px;width:1322px;height:26px;background:#fdf1c7"></div>
<div style="left:921px;top:387px;width:1px;height:26px;background:#fff"></div>
<div style="left:1102px;top:387px;width:1px;height:26px;background:#fff"></div>
<div style="left:1226px;top:387px;width:1px;height:26px;background:#fff"></div>
<div style="left:1343px;top:387px;width:1px;height:26px;background:#fff"></div>
<div style="left:1420px;top:387px;width:1px;height:26px;background:#fff"></div>
<div style="left:1442px;top:387px;width:1px;height:26px;background:#fff"></div>
<div style="left:345px;top:387px;width:399px;height:26px;box-sizing:border-box;border:2px solid #f7c714;background:#fde38f"></div>
<div style="left:310px;top:414px;width:1322px;height:1px;background:#e6e6e6"></div>
<div style="left:744px;top:386px;width:1px;height:29px;background:#c8c8c8"></div>
<div class="t" style="top:393px;font-size:13px;line-height:16px;color:#333;right:1329px;">2</div>
<div class="t" style="top:393px;font-size:13px;line-height:16px;color:#333;left:352px;letter-spacing:-0.1px">Яблоня Голден яблоки Сортность: Делишес</div>
<div class="t" style="top:393px;font-size:13px;line-height:16px;color:#333;right:570px;">50,000</div>
<div class="t" style="top:393px;font-size:13px;line-height:16px;color:#333;right:446px;">1,000</div>
<div class="t" style="top:393px;font-size:13px;line-height:16px;color:#333;right:329px;">50,000</div>
<div class="t" style="top:393px;font-size:13px;line-height:16px;color:#333;left:1352px;">кг</div>
<div style="left:310px;top:443px;width:1322px;height:1px;background:#e6e6e6"></div>
<div style="left:744px;top:415px;width:1px;height:29px;background:#c8c8c8"></div>
<div class="t" style="top:422px;font-size:13px;line-height:16px;color:#333;right:1329px;">3</div>
<div class="t" style="top:422px;font-size:13px;line-height:16px;color:#333;left:352px;letter-spacing:0.15px">Груша Дюшес 1 сорт</div>
<div class="t" style="top:422px;font-size:13px;line-height:16px;color:#333;right:570px;">65,000</div>
<div class="t" style="top:422px;font-size:13px;line-height:16px;color:#333;right:446px;">1,000</div>
<div class="t" style="top:422px;font-size:13px;line-height:16px;color:#333;right:329px;">65,000</div>
<div class="t" style="top:422px;font-size:13px;line-height:16px;color:#333;left:1352px;">кг</div>
<div style="left:310px;top:472px;width:1322px;height:1px;background:#e6e6e6"></div>
<div style="left:744px;top:444px;width:1px;height:29px;background:#c8c8c8"></div>
<div class="t" style="top:451px;font-size:13px;line-height:16px;color:#333;right:1329px;">4</div>
<div class="t" style="top:451px;font-size:13px;line-height:16px;color:#333;left:352px;letter-spacing:-0.1px">Виктория Елизавета II 1 сорт</div>
<div class="t" style="top:451px;font-size:13px;line-height:16px;color:#333;right:570px;">60,000</div>
<div class="t" style="top:451px;font-size:13px;line-height:16px;color:#333;right:446px;">1,000</div>
<div class="t" style="top:451px;font-size:13px;line-height:16px;color:#333;right:329px;">60,000</div>
<div class="t" style="top:451px;font-size:13px;line-height:16px;color:#333;left:1352px;">кг</div>
<div style="left:310px;top:525px;width:1322px;height:1px;background:#c8c8c8"></div>
<div style="left:311px;top:526px;width:1320px;height:29px;background:#f2f2f2"></div>
<div style="left:343px;top:526px;width:3px;height:29px;background:#fff"></div>
<div style="left:344px;top:526px;width:1px;height:30px;background:#d2d2d2"></div>
<div style="left:743px;top:526px;width:3px;height:29px;background:#fff"></div>
<div style="left:744px;top:526px;width:1px;height:30px;background:#d2d2d2"></div>
<div style="left:920px;top:526px;width:3px;height:29px;background:#fff"></div>
<div style="left:921px;top:526px;width:1px;height:30px;background:#d2d2d2"></div>
<div style="left:1067px;top:526px;width:3px;height:29px;background:#fff"></div>
<div style="left:1068px;top:526px;width:1px;height:30px;background:#d2d2d2"></div>
<div style="left:1088px;top:526px;width:3px;height:29px;background:#fff"></div>
<div style="left:1089px;top:526px;width:1px;height:30px;background:#d2d2d2"></div>
<div style="left:1211px;top:526px;width:3px;height:29px;background:#fff"></div>
<div style="left:1212px;top:526px;width:1px;height:30px;background:#d2d2d2"></div>
<div style="left:1328px;top:526px;width:3px;height:29px;background:#fff"></div>
<div style="left:1329px;top:526px;width:1px;height:30px;background:#d2d2d2"></div>
<div style="left:1405px;top:526px;width:3px;height:29px;background:#fff"></div>
<div style="left:1406px;top:526px;width:1px;height:30px;background:#d2d2d2"></div>
<div style="left:1427px;top:526px;width:3px;height:29px;background:#fff"></div>
<div style="left:1428px;top:526px;width:1px;height:30px;background:#d2d2d2"></div>
<div class="t" style="top:532px;font-size:13px;line-height:16px;color:#3a3a3a;font-weight:700;right:604px;letter-spacing:-0.3px">325,000</div>
<div class="t" style="top:532px;font-size:13px;line-height:16px;color:#3a3a3a;font-weight:700;right:343px;letter-spacing:-0.3px">325,000</div>
<svg style="left:318px;top:559px" width="6" height="8" viewBox="0 0 6 8"><path d="M5 0.5 V7.5 L1 4 Z" fill="#555"/></svg>
<div style="left:333px;top:559px;width:1277px;height:8px;border-radius:4px;background:#d8d8d8"></div>
<div style="left:338px;top:559px;width:1268px;height:8px;border-radius:4px;background:#9c9c9c"></div>
<svg style="left:1618px;top:559px" width="6" height="8" viewBox="0 0 6 8"><path d="M1 0.5 V7.5 L5 4 Z" fill="#555"/></svg>
<div class="t" style="top:595px;font-size:13px;line-height:16px;color:#4d4d4d;left:298px;">Комментарий:</div>
<div style="left:403px;top:590px;width:318px;height:25px;box-sizing:border-box;border:1px solid #a6a6a6;border-radius:3px;background:#fff"></div>
<div class="t" style="top:595px;font-size:13px;line-height:16px;color:#4d4d4d;left:730px;">Ответственный:</div>
<div style="left:830px;top:590px;width:401px;height:25px;box-sizing:border-box;border:1px solid #a6a6a6;border-radius:3px;background:#fff"></div>
<div style="left:1188px;top:591px;width:1px;height:23px;background:#a6a6a6"></div>
<div style="left:1209px;top:591px;width:1px;height:23px;background:#a6a6a6"></div>
<div class="t" style="top:595px;font-size:13px;line-height:16px;color:#333;left:835px;">Администратор</div>
<svg style="left:1194px;top:599px" width="8" height="6" viewBox="0 0 8 6"><path d="M1.8 1 H7 L4.4 3.8 Z" fill="#404040"/></svg>
<svg style="left:1215px;top:597px" width="11" height="11" viewBox="0 0 11 11"><g fill="none" stroke="#404040" stroke-width="1"><rect x="4.5" y="0.5" width="5" height="5"/><path d="M3 3.5 H1.5 V8.5 H6.5 V7"/></g></svg>
<div class="t" style="top:595px;font-size:13px;line-height:16px;color:#4d4d4d;left:1241px;">Заказ:</div>
<div style="left:1284px;top:590px;width:360px;height:25px;box-sizing:border-box;border:1px solid #d0d0d0;border-radius:3px;background:#fff"></div>
<div style="left:1622px;top:591px;width:1px;height:23px;background:#d0d0d0"></div>
<svg style="left:1628px;top:597px" width="11" height="11" viewBox="0 0 11 11"><g fill="none" stroke="#404040" stroke-width="1"><rect x="4.5" y="0.5" width="5" height="5"/><path d="M3 3.5 H1.5 V8.5 H6.5 V7"/></g></svg>
<div class="t" style="top:3px;font-size:13px;line-height:16px;color:#000;left:272px;">6. Нажмите кнопку <b><i>Провести и закрыть</i></b>.</div>
<div class="t" style="top:2px;font-size:13px;line-height:16px;color:#000;left:989px;">3. Выберите склад-получатель продукции. В документе &quot;Перемещение</div>
<div class="t" style="top:18px;font-size:13px;line-height:16px;color:#000;left:989px;letter-spacing:-0.04px">продукции&quot; склад-отправитель и склад-получатель должны быть разные.</div>
<div class="t" style="top:200px;font-size:13px;line-height:16px;color:#000;left:6px;letter-spacing:-0.06px">1. Выберите вид документа</div>
<div class="t" style="top:216px;font-size:13px;line-height:16px;color:#000;left:6px;">&quot;Перемещение продукции&quot;.</div>
<div class="t" style="top:245px;font-size:13px;line-height:16px;color:#000;left:6px;letter-spacing:-0.1px">2. Выберите склад-отправитель</div>
<div class="t" style="top:261px;font-size:13px;line-height:16px;color:#000;left:6px;">продукции.</div>
<div class="t" style="top:325px;font-size:13px;line-height:16px;color:#000;left:6px;">4. С помощью кнопок <b><i>Добавить</i></b> или</div>
<div class="t" style="top:341px;font-size:13px;line-height:16px;color:#000;left:6px;"><b><i>Подбор (УАУ)</i></b> добавьте номенклатуру:</div>
<div class="t" style="top:357px;font-size:13px;line-height:16px;color:#000;left:6px;">товары, продукцию, которые перемещаются</div>
<div class="t" style="top:373px;font-size:13px;line-height:16px;color:#000;left:6px;">с одного склада на другой.</div>
<div class="t" style="top:646px;font-size:13px;line-height:16px;color:#000;left:1037px;">5. Введите количество продукции.</div>
<svg style="left:0;top:0" width="1664" height="664" viewBox="0 0 1664 664">
<g stroke="#1a1a1a" stroke-width="1.1" fill="none">
<path d="M383.6 19.3 L377 107"/>
<path d="M1186.5 34 L1178 220.5"/>
<path d="M179.3 217.2 L400.6 204.3"/>
<path d="M192 262.3 L401.6 239.3"/>
<path d="M250.1 338.5 L347.8 321.4"/>
<path d="M1150.1 478.7 L1143.5 646"/>
</g>
<g stroke="#ff0000" stroke-width="2.6" stroke-linecap="round">
<path d="M308.2 318.8 H391.5"/><path d="M507.8 318.8 H631.5"/>
</g>
<path d="M924 474.8 H1343" stroke="#0000ff" stroke-width="2.6" stroke-linecap="round"/>
</svg>
</body></html>
